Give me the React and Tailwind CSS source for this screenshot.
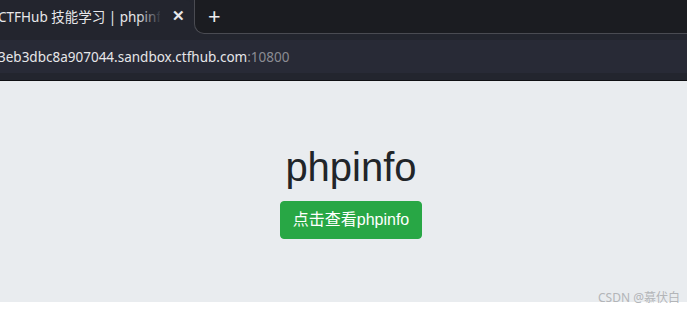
export default function App() {
  return (
    <div className="relative h-[311px] w-[687px] overflow-hidden flex flex-col bg-white font-['Liberation_Sans','Noto_Sans_CJK_SC',sans-serif]">
      {/* tab strip */}
      <div className="h-[34px] flex bg-[#23252e] font-['Noto_Sans','Noto_Sans_CJK_SC',sans-serif]">
        <div className="relative w-[194px] bg-[#23252e] rounded-tr-lg flex items-center">
          <span className="ml-[-2px] whitespace-nowrap text-[13.5px] text-[#e8e8ea] w-[162px] overflow-hidden">CTFHub 技能学习 | phpinfo</span>
          <div className="absolute left-[138px] top-0 h-full w-[24px] bg-linear-to-r from-[#23252e]/0 to-[#23252e]" />
          <span className="absolute left-[172px] top-[8px] text-[15px] font-bold text-[#e8e8ea] leading-none">✕</span>
        </div>
        <div className="flex-1 bg-[#1b1c21] border-l border-b border-[#4a4b52] rounded-bl-[10px] flex items-center">
          <span className="ml-[13px] mt-[-3px] text-[22px] text-[#ececee] leading-none">+</span>
        </div>
      </div>
      {/* toolbar */}
      <div className="h-[46px] bg-[#23252e] flex flex-col">
        <div className="h-[6px]" />
        <div className="h-[33px] bg-[#282a36] flex items-center pt-[2px] font-['Noto_Sans',sans-serif] text-[13.5px] whitespace-nowrap">
          <span className="ml-[-2px] text-[#e6e6e9]">3eb3dbc8a907044.sandbox.ctfhub.com</span>
          <span className="text-[#8b8c93]">:10800</span>
        </div>
      </div>
      <div className="h-px bg-[#0f1013]" />
      {/* page */}
      <div className="h-[221px] bg-[#e9ecef] pl-[15px] pt-[62px] flex flex-col items-center">
        <h1 className="text-[40px] leading-[48px] text-[#212529]">phpinfo</h1>
        <button className="mt-[10px] h-[38px] px-3 rounded bg-[#28a745] border border-[#28a745] text-white text-base leading-6">
          点击查看phpinfo
        </button>
      </div>
      <div className="absolute right-[7px] bottom-[7px] text-[12px] leading-[12px] text-[#b3b5b8] font-['Noto_Sans','Noto_Sans_CJK_SC',sans-serif]">
        CSDN @慕伏白
      </div>
    </div>
  );
}
